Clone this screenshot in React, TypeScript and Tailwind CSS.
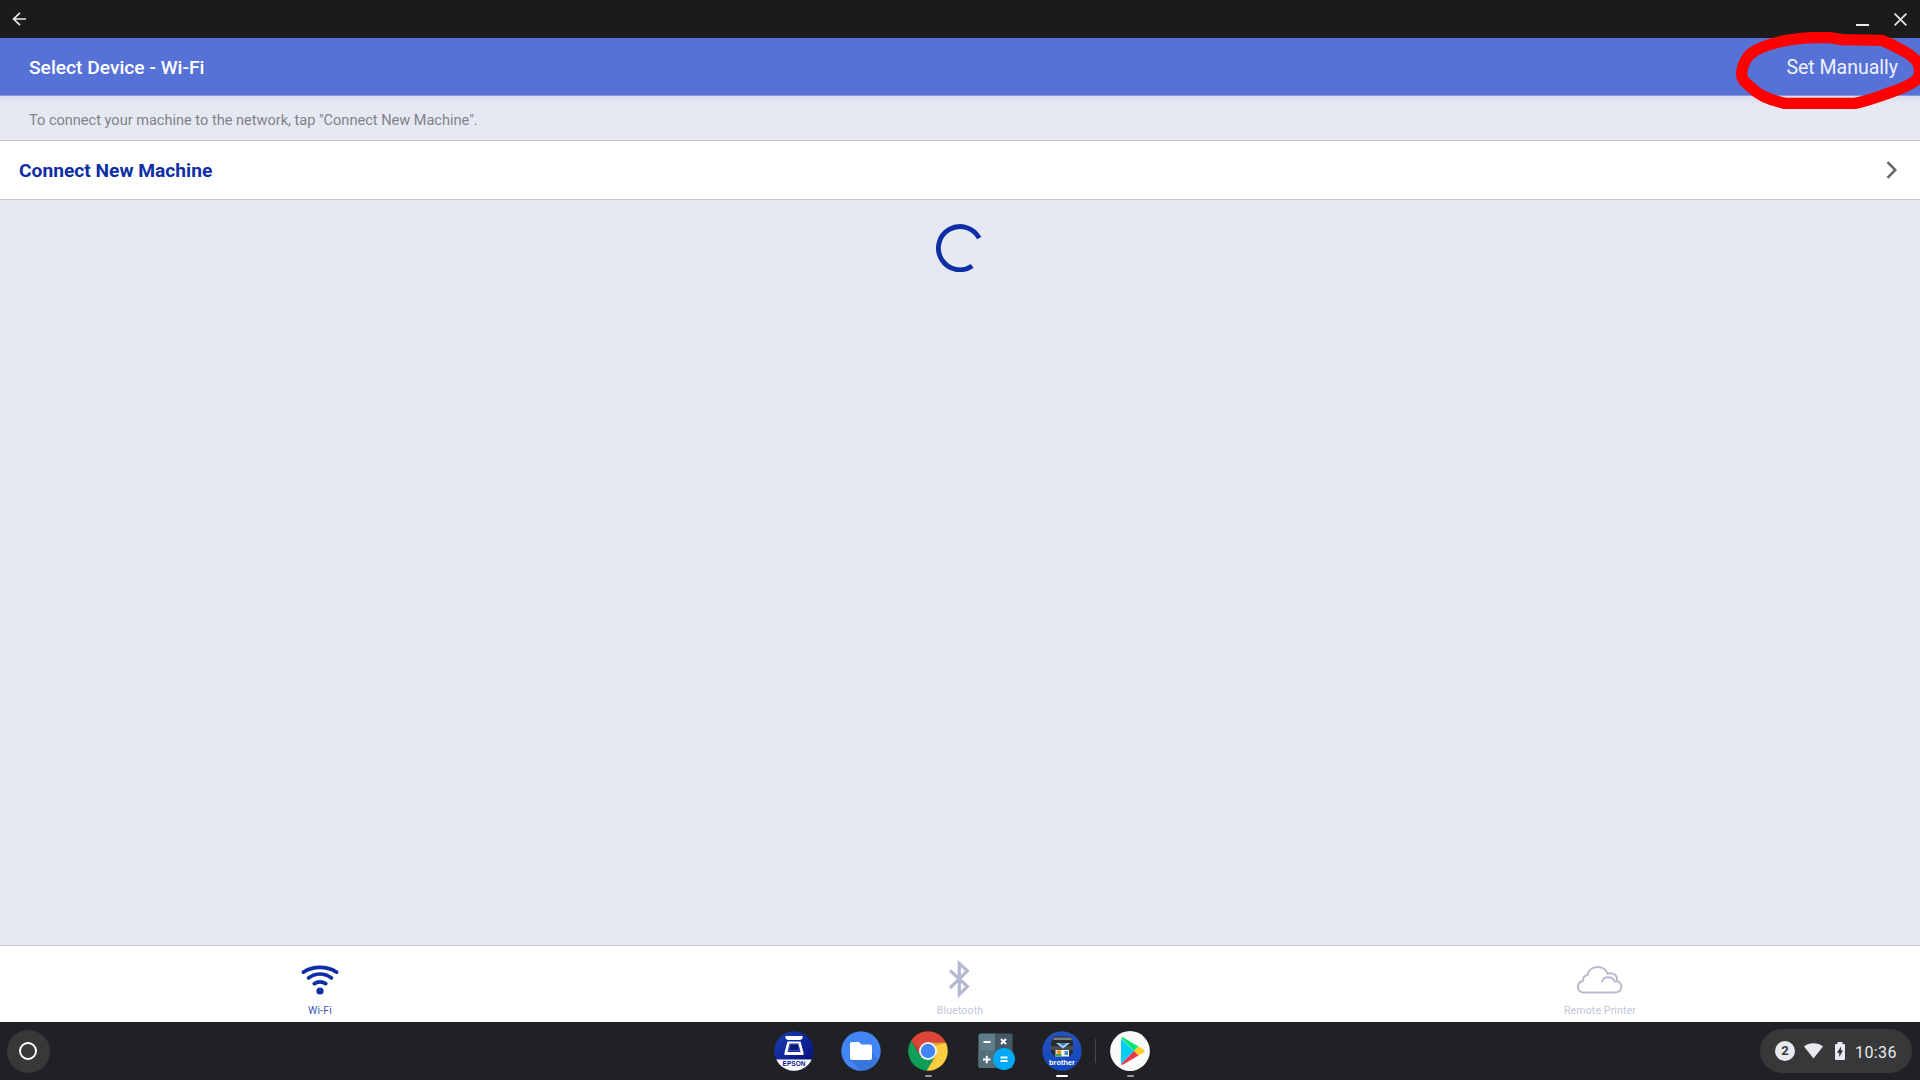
import React from "react";

function TitleBar() {
  return (
    <header className="flex h-[38px] shrink-0 items-center bg-[#1b1b1b] text-[#e8eaed]">
      <svg className="ml-[12px] h-[14px] w-[14px]" viewBox="0 0 14 14" fill="none" stroke="currentColor" strokeWidth="1.7">
        <path d="M14 7H1.5M8 .9L1.6 7 8 13.1" />
      </svg>
      <svg className="ml-auto mt-[11px] h-[2px] w-[13px]" viewBox="0 0 13 2" fill="currentColor">
        <rect width="13" height="2" />
      </svg>
      <svg className="ml-[25px] mr-[13px] h-[13px] w-[13px]" viewBox="0 0 13 13" fill="none" stroke="currentColor" strokeWidth="1.7">
        <path d="M.6.6l11.8 11.8M12.4.6L.6 12.4" />
      </svg>
    </header>
  );
}

function Spinner() {
  return (
    <svg className="mx-auto mt-[24px] h-[48px] w-[48px]" viewBox="0 0 48 48" fill="none" stroke="#0d2ea4" strokeWidth="4.8">
      <path d="M43.6 14.200A21.6 21.6 0 1 0 36.6 42" transform="translate(-.4 0)" />
    </svg>
  );
}

function WifiIcon() {
  return (
    <svg className="h-[40px] w-[40px]" viewBox="0 0 40 40" fill="none" stroke="#0d2ea4" strokeWidth="3.6" strokeLinecap="round">
      <path d="M3.3 12.2C13 5.8 27 5.8 36.7 12.2M8.5 18C15.500 12.700 24.500 12.700 31.500 18M14.200 23.700C17.500 21.200 22.500 21.200 25.800 23.700" />
      <circle cx="20" cy="31" r="3.6" fill="#0d2ea4" stroke="none" />
    </svg>
  );
}

function BluetoothIcon() {
  return (
    <svg className="h-[40px] w-[40px]" viewBox="0 0 40 40" fill="none" stroke="#b5b9d0" strokeWidth="3.200">
      <path d="M10 10.300L27.400 26.600 19.300 34.500V3.500L27.400 10.900 10 28" />
    </svg>
  );
}

function CloudIcon() {
  return (
    <svg className="h-[40px] w-[48px]" viewBox="0 0 48 40" fill="none" stroke="#b8bbd1" strokeWidth="2" strokeLinecap="round" strokeLinejoin="round">
      <path d="M7.500 32.500H38.500C46.800 32.500 47.500 22 40.800 21.200C42.500 15.500 36.500 11.800 31.800 13.900C28 3.800 13 5 11.500 15C7.800 15.800 6.800 18.300 7.300 20.800C-.2 22.500 .5 32.500 7.500 32.500Z" />
      <path d="M26.200 21.400C27.500 16.300 36 15.600 39 21.800" />
    </svg>
  );
}

function EpsonIcon() {
  return (
    <svg className="h-[40px] w-[40px]" viewBox="0 0 40 40">
      <defs>
        <clipPath id="epson"><circle cx="20" cy="20" r="19.700" /></clipPath>
        <linearGradient id="epsonBlue" x2="1" y2="1"><stop stopColor="#1840b0" /><stop offset=".5" stopColor="#10249b" /><stop offset="1" stopColor="#080b67" /></linearGradient>
      </defs>
      <g clipPath="url(#epson)">
        <path fill="url(#epsonBlue)" d="M0 0h40v40H0z" />
        <path fill="#fff" d="M0 28.500h40V40H0z" />
      </g>
      <path fill="#fff" d="M11.500 5h17v2.500l-2 1.500h-13l-2-1.500z" />
      <path fill="#fff" fillRule="evenodd" d="M13.500 10.500h13l3 11V24H10.500v-2.500zM15.500 12.500l-2 8.500h13l-2-8.500z" />
      <path fill="#0b1a78" stroke="#6d84cb" strokeWidth=".6" d="M16 13h8l1.400 6.500H14.600z" />
      <text x="20" y="34.800" textAnchor="middle" textLength="23" lengthAdjust="spacingAndGlyphs" fill="#13188d" fontFamily="Liberation Sans" fontWeight="700" fontSize="7.500">EPSON</text>
    </svg>
  );
}

function FilesIcon() {
  return (
    <svg className="h-[40px] w-[40px]" viewBox="0 0 40 40">
      <circle cx="20" cy="20" r="19.700" fill="#4285f4" />
      <path fill="#326dcc" opacity=".6" d="M9 28l10 11.500a19.700 19.700 0 0 0 18.500-11L31 21z" />
      <path fill="#fff" d="M11 11h7l2.500 2.500H29a2 2 0 0 1 2 2V27a2 2 0 0 1-2 2H11a2 2 0 0 1-2-2V13a2 2 0 0 1 2-2z" />
    </svg>
  );
}

function ChromeIcon() {
  return (
    <svg className="h-[40px] w-[40px]" viewBox="0 0 40 40">
      <defs><clipPath id="chrome"><circle cx="20" cy="20" r="19.800" /></clipPath></defs>
      <g clipPath="url(#chrome)">
        <path fill="#db4437" d="M0 0h40v11.500H20L11.500 24 2.500 9z" />
        <path fill="#0f9d58" d="M3 9l9.500 16 14 .5L18 42H0V9z" />
        <path fill="#ffcd40" d="M20 11.500h20V40H18.500l9-15.500z" />
        <path fill="#8e201b" opacity=".25" d="M20 11.500h18.500L27 15zM3 9l9 16 .5-7z" />
      </g>
      <circle cx="20" cy="20" r="9" fill="#f5f5f5" />
      <circle cx="20" cy="20" r="7.200" fill="#4285f4" />
    </svg>
  );
}

function CalculatorIcon() {
  return (
    <svg className="h-[40px] w-[40px]" viewBox="0 0 40 40">
      <path fill="#607d8b" d="M4.500 2.500H19.500V37H4.500a2 2 0 0 1-2-2v-30.500a2 2 0 0 1 2-2z" />
      <path fill="#455a64" d="M19.500 2.500H34.500a2 2 0 0 1 2 2V37H19.500z" />
      <path fill="#546e7a" d="M2.500 19.500h17V37H4.500a2 2 0 0 1-2-2z" />
      <path d="M7.500 11h7M7 28.500h7.500M10.800 24.800v7.400M25 8l5 5M30 8l-5 5" stroke="#fff" strokeWidth="2" />
      <circle cx="28" cy="28" r="11" fill="#03a9f4" />
      <path d="M24.500 26.500h7M24.500 30h7" stroke="#fff" strokeWidth="1.800" />
    </svg>
  );
}

function BrotherIcon() {
  return (
    <svg className="h-[40px] w-[40px]" viewBox="0 0 40 40">
      <defs><linearGradient id="brotherBlue" x2="0" y2="1"><stop stopColor="#2552bd" /><stop offset="1" stopColor="#1247c0" /></linearGradient></defs>
      <circle cx="20" cy="20" r="19.700" fill="url(#brotherBlue)" />
      <path fill="#292b2d" d="M11.500 5.500h17.500l2 6v10l-3 3h-16l-3-3v-10z" />
      <path fill="#777e80" d="M12 6.500h17l1 2.500H11z" />
      <path fill="#464b4e" d="M9 15h22v4H9z" />
      <path fill="#a6d5f4" d="M14 12h14L21 17.500z" />
      <path fill="#3c7bb9" d="M17 12h8l-4 3z" />
      <path fill="#f4f3e9" d="M13.500 19H27V25.500H13.500z" />
      <circle cx="17" cy="21.500" r="2.400" fill="#ed8f29" />
      <path fill="#45a35b" d="M13.500 23h6v2.500h-6z" />
      <path fill="#418eca" d="M22.500 20h3.500v4h-3.500z" />
      <text x="20" y="33.500" textAnchor="middle" textLength="26" lengthAdjust="spacingAndGlyphs" fill="#fff" fontFamily="Liberation Sans" fontWeight="700" fontSize="7.800">brother</text>
    </svg>
  );
}

function PlayIcon() {
  return (
    <svg className="h-[40px] w-[40px]" viewBox="0 0 40 40">
      <circle cx="20" cy="20" r="19.900" fill="#fafafa" />
      <path fill="#00cff5" d="M11 7.500v25.500L24 20z" />
      <path fill="#00e676" d="M11 6.800q.8-1 2.200-.2L28.500 15.500 24 20z" />
      <path fill="#ffc928" d="M28.500 15.500l5.500 3.200q1.500 1.200 0 2.500l-5.500 3.300L24 20z" />
      <path fill="#ef3849" d="M11 33.200q.8 1.200 2.200.4l15.300-9.100L24 20z" />
    </svg>
  );
}

function ShelfApp({ children, className = "", indicator = "" }: { children: React.ReactNode; className?: string; indicator?: string }) {
  return (
    <div className={`flex h-[58px] w-[40px] shrink-0 flex-col items-center pt-[9px] ${className}`}>
      {children}
      {indicator && <div className={`mt-[4px] h-[2px] rounded-full ${indicator}`} />}
    </div>
  );
}

function Shelf() {
  return (
    <footer className="flex h-[58px] shrink-0 items-center bg-[#202124]">
      <div className="ml-[7px] flex h-[43px] w-[43px] items-center justify-center rounded-full bg-[#37383a]">
        <div className="mr-px h-[18px] w-[18px] rounded-full border-2 border-white" />
      </div>
      <div className="ml-[724px] flex items-center">
        <ShelfApp><EpsonIcon /></ShelfApp>
        <ShelfApp className="ml-[27px]"><FilesIcon /></ShelfApp>
        <ShelfApp className="ml-[27px]" indicator="w-[7px] bg-[#9a9b9d]"><ChromeIcon /></ShelfApp>
        <ShelfApp className="ml-[28px]"><CalculatorIcon /></ShelfApp>
        <ShelfApp className="ml-[26px]" indicator="w-[12px] bg-white"><BrotherIcon /></ShelfApp>
        <div className="ml-[13px] h-[24px] w-px bg-[#47484a]" />
        <ShelfApp className="ml-[14px]" indicator="w-[7px] bg-[#9a9b9d]"><PlayIcon /></ShelfApp>
      </div>
      <div className="ml-auto mr-[8px] flex h-[44px] w-[152px] items-center rounded-full bg-[#37383a] pl-[15px] text-[#e8eaed]">
        <div className="flex h-[20px] w-[20px] items-center justify-center rounded-full bg-[#e8eaed] text-[13px] font-bold text-[#37383a]">2</div>
        <svg className="ml-[9px] h-[16px] w-[19px]" viewBox="0 0 19 16" fill="currentColor"><path d="M0 3.500C5.500-.8 13.500-.8 19 3.500L9.500 15.500z" /></svg>
        <svg className="ml-[12px] h-[18px] w-[10px]" viewBox="0 0 10 18">
          <path fill="#e8eaed" d="M2.500 0h5v2H9a1 1 0 0 1 1 1v14a1 1 0 0 1-1 1H1a1 1 0 0 1-1-1V3a1 1 0 0 1 1-1h1.500z" />
          <path fill="#303134" d="M6 4.500L2 10.800h2.200V15L8 8.500H6z" />
        </svg>
        <span className="ml-[10px] mt-[3px] text-[16px] leading-none tracking-[0.4px]">10:36</span>
      </div>
    </footer>
  );
}

const tabs = [
  { label: "Wi-Fi", icon: <WifiIcon />, color: "text-[#3d57b5]" },
  { label: "Bluetooth", icon: <BluetoothIcon />, color: "text-[#c3c6d9]" },
  { label: "Remote Printer", icon: <CloudIcon />, color: "text-[#c3c6d9]" },
];

export default function App() {
  return (
    <div className="relative flex h-[1080px] w-[1920px] flex-col overflow-hidden bg-[#e6e9f4] font-['Roboto',sans-serif]">
      <TitleBar />
      <div className="flex h-[58px] shrink-0 items-center justify-between border-b border-[#8998dc] bg-[#5672d7] pl-[29px] pr-[22px] pt-[2px] text-[19.500px] leading-none text-white">
        <h1 className="text-[19.200px] font-medium">Select Device - Wi-Fi</h1>
        <button className="text-[#eef1fc]">Set Manually</button>
      </div>
      <div className="flex h-[45px] shrink-0 items-center border-b border-[#c8c9cb] bg-linear-to-b from-[#dcdfeb] to-[#e6e9f4] to-20% pl-[29px] pt-[6px] text-[14.550px] text-[#808287]">
        To connect your machine to the network, tap "Connect New Machine".
      </div>
      <button className="flex h-[59px] shrink-0 items-center justify-between border-b border-[#c8c9cb] bg-white pl-[19px] pr-[22px] text-[19.200px] font-bold text-[#0d2ea4]">
        <span className="pt-[2px]">Connect New Machine</span>
        <svg className="h-[18px] w-[12px]" viewBox="0 0 12 18" fill="none" stroke="#666" strokeWidth="2.500"><path d="M1.500 1.200L9.300 9l-7.800 7.800" /></svg>
      </button>
      <main className="min-h-0 flex-1"><Spinner /></main>
      <nav className="grid h-[77px] shrink-0 grid-cols-3 border-t border-[#c8c9cd] bg-white">
        {tabs.map((tab) => (
          <div key={tab.label} className={`flex flex-col items-center pt-[14px] text-[10.500px] leading-none tracking-[0.150px] ${tab.color}`}>
            {tab.icon}
            <span className="mt-[6px]">{tab.label}</span>
          </div>
        ))}
      </nav>
      <Shelf />
      <svg className="pointer-events-none absolute right-0 top-0 h-[220px] w-[220px]" viewBox="0 0 660 660" fill="none" stroke="#f00" strokeWidth="34" strokeLinejoin="round">
        <path d="M125 218C127 193 137 178 150 163C175 142 215 130 260 121C290 117 310 113 340 113H390L425 119L545 121C565 129 580 136 600 147C625 160 645 172 654 190C660 205 660 220 654 235C642 250 610 264 570 278C540 288 510 301 465 310H255C220 303 180 289 155 264C130 242 123 235 125 218Z" />
      </svg>
    </div>
  );
}
